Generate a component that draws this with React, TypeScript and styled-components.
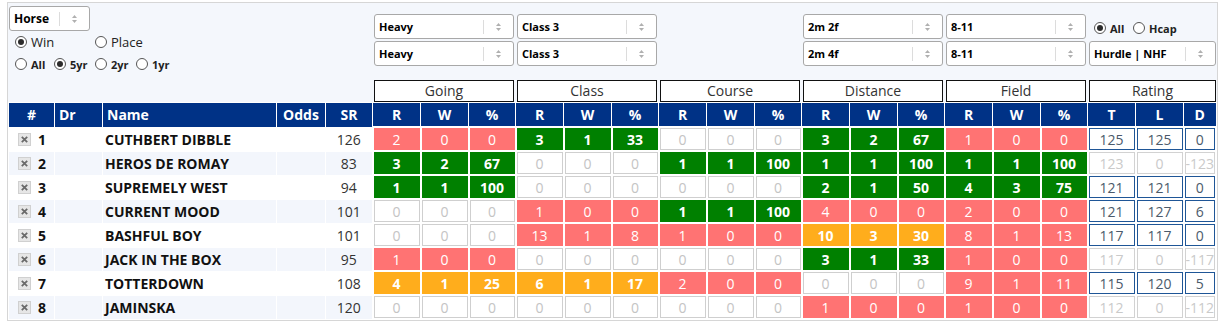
import React from "react";
import styled, { createGlobalStyle } from "styled-components";

type Tone = "red" | "green" | "orange" | "none" | "rating" | "ratingOff";
type Stat = [number, number, number];

interface Runner {
  no: number;
  name: string;
  sr: number;
  stats: Stat[];
  rating: { t: number; l: number; d: number; active: boolean };
}

const GROUPS = ["Going", "Class", "Course", "Distance", "Field"];

const RUNNERS: Runner[] = [
  { no: 1, name: "CUTHBERT DIBBLE", sr: 126, stats: [[2, 0, 0], [3, 1, 33], [0, 0, 0], [3, 2, 67], [1, 0, 0]], rating: { t: 125, l: 125, d: 0, active: true } },
  { no: 2, name: "HEROS DE ROMAY", sr: 83, stats: [[3, 2, 67], [0, 0, 0], [1, 1, 100], [1, 1, 100], [1, 1, 100]], rating: { t: 123, l: 0, d: -123, active: false } },
  { no: 3, name: "SUPREMELY WEST", sr: 94, stats: [[1, 1, 100], [0, 0, 0], [0, 0, 0], [2, 1, 50], [4, 3, 75]], rating: { t: 121, l: 121, d: 0, active: true } },
  { no: 4, name: "CURRENT MOOD", sr: 101, stats: [[0, 0, 0], [1, 0, 0], [1, 1, 100], [4, 0, 0], [2, 0, 0]], rating: { t: 121, l: 127, d: 6, active: true } },
  { no: 5, name: "BASHFUL BOY", sr: 101, stats: [[0, 0, 0], [13, 1, 8], [1, 0, 0], [10, 3, 30], [8, 1, 13]], rating: { t: 117, l: 117, d: 0, active: true } },
  { no: 6, name: "JACK IN THE BOX", sr: 95, stats: [[1, 0, 0], [0, 0, 0], [0, 0, 0], [3, 1, 33], [1, 0, 0]], rating: { t: 117, l: 0, d: -117, active: false } },
  { no: 7, name: "TOTTERDOWN", sr: 108, stats: [[4, 1, 25], [6, 1, 17], [2, 0, 0], [0, 0, 0], [9, 1, 11]], rating: { t: 115, l: 120, d: 5, active: true } },
  { no: 8, name: "JAMINSKA", sr: 120, stats: [[0, 0, 0], [0, 0, 0], [0, 0, 0], [1, 0, 0], [1, 0, 0]], rating: { t: 112, l: 0, d: -112, active: false } },
];

// colour a stat group by its strike rate
const toneOf = ([runs, , pct]: Stat): Tone => {
  if (runs === 0) return "none";
  if (pct >= 33) return "green";
  if (pct >= 15) return "orange";
  return "red";
};

const TONES: Record<Tone, { bg: string; border: string; color: string; weight: number }> = {
  red: { bg: "#ff7373", border: "#ff7373", color: "#fff", weight: 400 },
  green: { bg: "#008000", border: "#008000", color: "#fff", weight: 700 },
  orange: { bg: "#ffad1c", border: "#ffad1c", color: "#fff", weight: 700 },
  none: { bg: "#fff", border: "#cfcfcf", color: "#c4c4c4", weight: 400 },
  rating: { bg: "#fff", border: "#1f5697", color: "#4b5a6b", weight: 400 },
  ratingOff: { bg: "#fff", border: "#d2d2d2", color: "#cacaca", weight: 400 },
};

const GlobalStyle = createGlobalStyle`
  body {
    margin: 0;
    background: #fff;
    font-family: "Open Sans", "Noto Sans", sans-serif;
    color: #222;
  }
`;

const Panel = styled.div`
  box-sizing: border-box;
  width: 1211px;
  margin: 2px 0 0 7px;
  border: 1px solid #d6d6d6;
  background: #f4f7fc;
`;

const Filters = styled.div`
  display: grid;
  grid-template-columns: 364px repeat(5, 143px) 1fr;
  height: 99px;
`;

const LeftFilters = styled.div`
  padding: 3px 0 0 1px;
`;

const RadioRow = styled.div<{ $indent?: number }>`
  display: flex;
  align-items: center;
  height: 22px;
  padding-left: ${(p) => p.$indent ?? 6}px;
`;

const GroupFilters = styled.div`
  display: flex;
  flex-direction: column;
  gap: 2px;
  padding: 11px 1px 0 2px;
`;

const RatingRadios = styled.div`
  display: flex;
  align-items: center;
  height: 25px;
  padding: 3px 0 0 5px;
  box-sizing: border-box;
`;

const GroupLabel = styled.div`
  box-sizing: border-box;
  height: 22px;
  margin-top: auto;
  border: 1px solid #111;
  background: #fff;
  color: #333;
  font-size: 14px;
  line-height: 20px;
  text-align: center;
`;

const SelectBox = styled.div<{ $width?: number; $size?: number }>`
  box-sizing: border-box;
  width: ${(p) => (p.$width ? `${p.$width}px` : "100%")};
  height: 25px;
  display: flex;
  align-items: center;
  padding-left: 4px;
  background: #fff;
  border: 1px solid #a8a8a8;
  border-radius: 3px;
  font-size: ${(p) => p.$size ?? 11}px;
  font-weight: 700;
  color: #000;
`;

const SelectValue = styled.span`
  flex: 1;
  white-space: nowrap;
  overflow: hidden;
`;

const SelectDivider = styled.span`
  width: 1px;
  height: 14px;
  background: #dcdcdc;
`;

const SelectArrow = styled.span`
  width: 29px;
  display: flex;
  align-items: center;
  justify-content: center;
`;

const RadioLabel = styled.label<{ $bold?: boolean; $width?: number }>`
  display: inline-flex;
  align-items: center;
  gap: 4px;
  flex: none;
  width: ${(p) => (p.$width ? `${p.$width}px` : "auto")};
  font-size: ${(p) => (p.$bold ? 11 : 13)}px;
  font-weight: ${(p) => (p.$bold ? 700 : 400)};
  color: #222;
`;

const RadioDot = styled.span<{ $checked?: boolean }>`
  box-sizing: border-box;
  width: 12px;
  height: 12px;
  border-radius: 50%;
  border: 1px solid #555;
  background: #fff;
  display: flex;
  align-items: center;
  justify-content: center;

  &::after {
    content: "";
    display: ${(p) => (p.$checked ? "block" : "none")};
    width: 6px;
    height: 6px;
    border-radius: 50%;
    background: #2b2b2b;
  }
`;

const Table = styled.table`
  width: 100%;
  table-layout: fixed;
  border-collapse: collapse;
`;

const HeadCell = styled.th<{ $align?: string }>`
  height: 23px;
  padding: 0 0 0 ${(p) => (p.$align === "left" ? 4 : 0)}px;
  border: 1px solid #fff;
  background: #003286;
  color: #fff;
  font-size: 14px;
  font-weight: 700;
  text-align: ${(p) => p.$align ?? "center"};
`;

const Row = styled.tr<{ $alt: boolean }>`
  background: ${(p) => (p.$alt ? "#f3f6fc" : "#fff")};
`;

const Cell = styled.td<{ $align?: string; $bold?: boolean }>`
  height: 22px;
  padding: 0 0 0 ${(p) => (p.$align === "left" ? 2 : 0)}px;
  border: 1px solid #fff;
  font-size: 14px;
  font-weight: ${(p) => (p.$bold ? 700 : 400)};
  color: ${(p) => (p.$bold ? "#111" : "#333")};
  text-align: ${(p) => p.$align ?? "center"};
  white-space: nowrap;
  overflow: hidden;
`;

const NumberWrap = styled.div`
  display: flex;
  align-items: center;
  gap: 7px;
  padding-left: 7px;
  font-weight: 700;
  color: #111;
`;

const StatCell = styled.td`
  padding: 0;
  border: 2px solid #fff;
  background: #fff;
`;

const StatBox = styled.div<{ $tone: Tone }>`
  box-sizing: border-box;
  height: 22px;
  display: flex;
  align-items: center;
  justify-content: center;
  overflow: hidden;
  white-space: nowrap;
  border: 1px solid ${(p) => TONES[p.$tone].border};
  background: ${(p) => TONES[p.$tone].bg};
  color: ${(p) => TONES[p.$tone].color};
  font-size: 14px;
  font-weight: ${(p) => TONES[p.$tone].weight};
`;

const Select = ({ value, width, size }: { value: string; width?: number; size?: number }) => (
  <SelectBox $width={width} $size={size}>
    <SelectValue>{value}</SelectValue>
    <SelectDivider />
    <SelectArrow>
      <svg width="7" height="10" viewBox="0 0 7 10">
        <path d="M3.5 1 L6 4 L1 4 Z" fill="#b0b0b0" />
        <path d="M1 6 L6 6 L3.5 9 Z" fill="#b0b0b0" />
      </svg>
    </SelectArrow>
  </SelectBox>
);

const Radio = ({ label, checked, bold, width }: { label: string; checked?: boolean; bold?: boolean; width?: number }) => (
  <RadioLabel $bold={bold} $width={width}>
    <RadioDot $checked={checked} />
    {label}
  </RadioLabel>
);

const RemoveIcon = () => (
  <svg width="13" height="13" viewBox="0 0 13 13">
    <rect x="0.5" y="0.5" width="12" height="12" fill="#e6e6e6" stroke="#d0d0d0" />
    <path d="M3.8 3.8 L9.2 9.2 M9.2 3.8 L3.8 9.2" stroke="#6a6a6a" strokeWidth="1.8" />
  </svg>
);

const FILTERS: (string[] | null)[] = [
  ["Heavy", "Heavy"],
  ["Class 3", "Class 3"],
  null,
  ["2m 2f", "2m 4f"],
  ["8-11", "8-11"],
];

const STAT_WIDTHS = [48, 48, 47];

const App = (): JSX.Element => (
  <>
    <GlobalStyle />
    <Panel>
      <Filters>
        <LeftFilters>
          <Select value="Horse" width={81} size={12} />
          <RadioRow>
            <Radio label="Win" checked width={80} />
            <Radio label="Place" />
          </RadioRow>
          <RadioRow>
            <Radio label="All" bold width={39} />
            <Radio label="5yr" bold checked width={41} />
            <Radio label="2yr" bold width={41} />
            <Radio label="1yr" bold />
          </RadioRow>
        </LeftFilters>
        {GROUPS.map((g, i) => (
          <GroupFilters key={g}>
            {FILTERS[i]?.map((v, j) => <Select key={j} value={v} />)}
            <GroupLabel>{g}</GroupLabel>
          </GroupFilters>
        ))}
        <GroupFilters>
          <RatingRadios>
            <Radio label="All" bold checked width={39} />
            <Radio label="Hcap" bold />
          </RatingRadios>
          <Select value="Hurdle | NHF" />
          <GroupLabel>Rating</GroupLabel>
        </GroupFilters>
      </Filters>
      <Table>
        <colgroup>
          <col style={{ width: 46 }} />
          <col style={{ width: 48 }} />
          <col style={{ width: 174 }} />
          <col style={{ width: 49 }} />
          <col style={{ width: 47 }} />
          {GROUPS.flatMap((g) => STAT_WIDTHS.map((w, i) => <col key={g + i} style={{ width: w }} />))}
          <col style={{ width: 48 }} />
          <col style={{ width: 48 }} />
          <col />
        </colgroup>
        <thead>
          <tr>
            <HeadCell>#</HeadCell>
            <HeadCell $align="left">Dr</HeadCell>
            <HeadCell $align="left">Name</HeadCell>
            <HeadCell>Odds</HeadCell>
            <HeadCell>SR</HeadCell>
            {GROUPS.flatMap((g) => ["R", "W", "%"].map((h) => <HeadCell key={g + h}>{h}</HeadCell>))}
            <HeadCell>T</HeadCell>
            <HeadCell>L</HeadCell>
            <HeadCell>D</HeadCell>
          </tr>
        </thead>
        <tbody>
          {RUNNERS.map((r, idx) => {
            const ratingTone: Tone = r.rating.active ? "rating" : "ratingOff";
            return (
              <Row key={r.no} $alt={idx % 2 === 1}>
                <Cell $align="left">
                  <NumberWrap>
                    <RemoveIcon />
                    {r.no}
                  </NumberWrap>
                </Cell>
                <Cell />
                <Cell $align="left" $bold>
                  {r.name}
                </Cell>
                <Cell />
                <Cell>{r.sr}</Cell>
                {r.stats.flatMap((s, gi) =>
                  s.map((v, vi) => (
                    <StatCell key={`${gi}-${vi}`}>
                      <StatBox $tone={toneOf(s)}>{v}</StatBox>
                    </StatCell>
                  ))
                )}
                <StatCell>
                  <StatBox $tone={ratingTone}>{r.rating.t}</StatBox>
                </StatCell>
                <StatCell>
                  <StatBox $tone={ratingTone}>{r.rating.l}</StatBox>
                </StatCell>
                <StatCell>
                  <StatBox $tone={ratingTone}>{r.rating.d}</StatBox>
                </StatCell>
              </Row>
            );
          })}
        </tbody>
      </Table>
    </Panel>
  </>
);

export default App;
